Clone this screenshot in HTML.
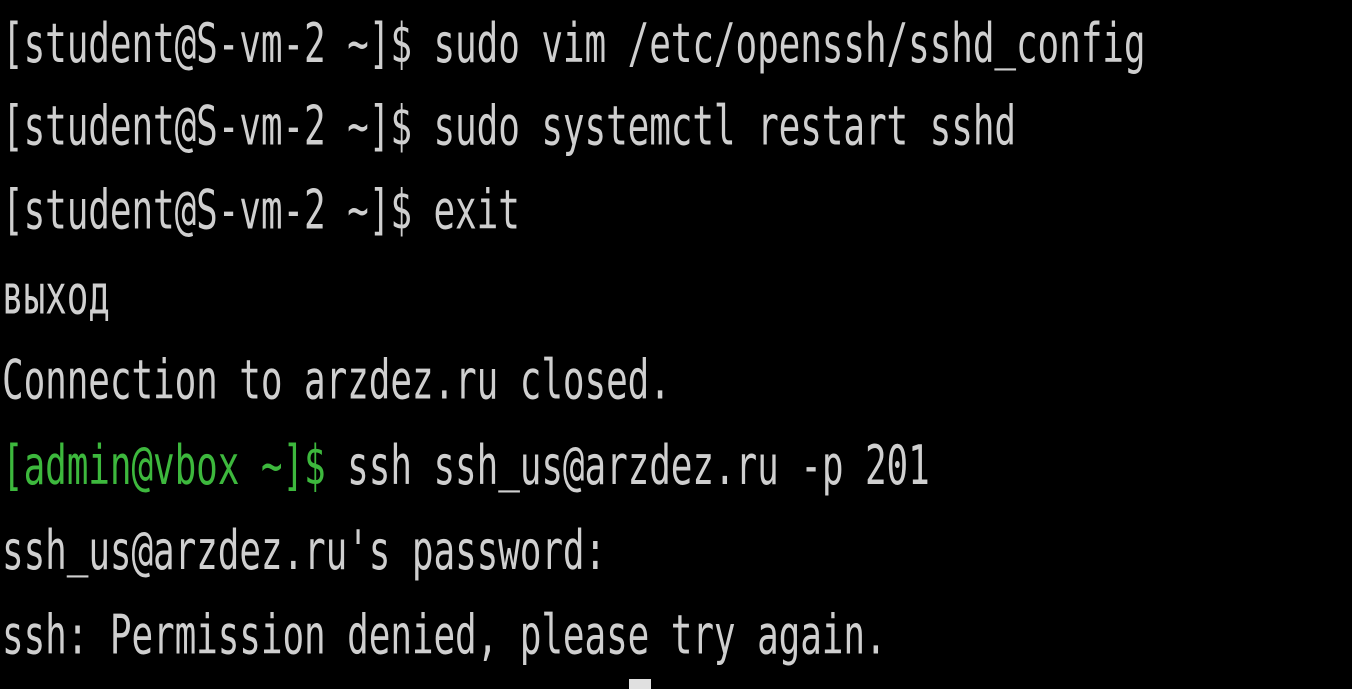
<!DOCTYPE html>
<html><head><meta charset="utf-8"><style>
html,body{margin:0;padding:0;background:#000;width:1352px;height:689px;overflow:hidden}
.l{position:absolute;left:2px;font-family:"DejaVu Sans Mono","Liberation Mono",monospace;font-size:36px;line-height:40px;padding-bottom:4px;color:#cfcfcf;white-space:pre;transform:scale(1,1.5);transform-origin:0 0;letter-spacing:-0.1px}
.u{display:inline-block;position:relative;vertical-align:3px}
.g{color:#3db83d}
.c{position:absolute;left:629px;top:679px;width:22px;height:10px;background:#e0e0e0}
</style></head><body>
<div class="l" style="top:11px">[student@S-vm-2 ~]$ sudo vim /etc/openssh/sshd<span class="u">_</span>config</div>
<div class="l" style="top:98px">[student@S-vm-2 ~]$ sudo systemctl restart sshd</div>
<div class="l" style="top:182px">[student@S-vm-2 ~]$ exit</div>
<div class="l" style="top:267px">выход</div>
<div class="l" style="top:352px">Connection to arzdez.ru closed.</div>
<div class="l" style="top:433px"><span class="g">[admin@vbox ~]$</span> ssh ssh<span class="u">_</span>us@arzdez.ru -p 201</div>
<div class="l" style="top:518px">ssh<span class="u">_</span>us@arzdez.ru's password:</div>
<div class="l" style="top:607px">ssh: Permission denied, please try again.</div>
<div class="c"></div>
</body></html>
